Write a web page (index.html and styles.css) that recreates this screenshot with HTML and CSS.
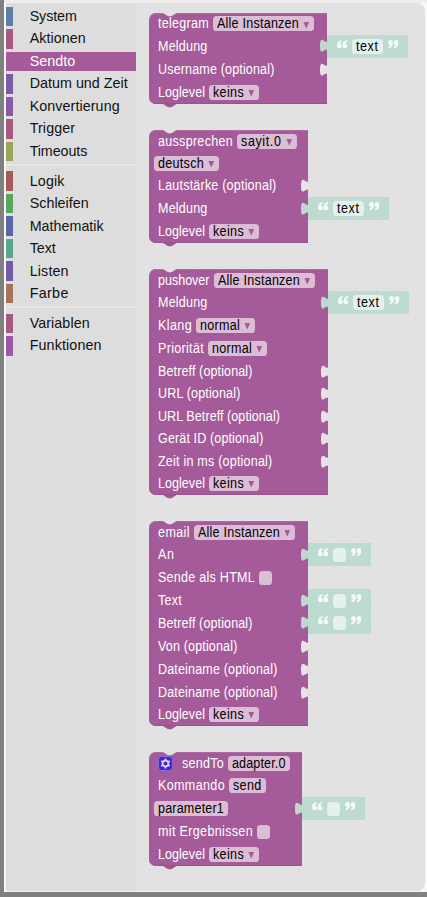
FILE: index.html
```html
<!DOCTYPE html>
<html lang="de">
<head>
<meta charset="utf-8">
<title>Blockly</title>
<link rel="stylesheet" href="styles.css">
</head>
<body>
<svg class="defs" aria-hidden="true">
  <symbol id="notch" viewBox="0 0 15 4"><path d="M0 0L6 4H9L15 0Z"/></symbol>
  <symbol id="tab" viewBox="0 0 8 15"><path d="M8 0C8 10 0-8 0 7.500S8 5 8 15Z"/></symbol>
  <symbol id="arrow" viewBox="0 0 7 8"><path d="M0 0H7L3.500 8Z"/></symbol>
  <symbol id="quote" viewBox="0 0 11 9"><path d="M4.600 0C1.600.500 0 2.600 0 5.700C0 7.800 1 8.900 2.600 8.900C4.100 8.900 5.100 7.900 5.100 6.400C5.100 5 4.200 4 3 3.900C3.200 2.900 3.800 2 5 1.500ZM10.400 0C7.400.500 5.800 2.600 5.800 5.700C5.800 7.800 6.800 8.900 8.400 8.900C9.900 8.900 10.900 7.900 10.900 6.400C10.900 5 10 4 8.800 3.900C9 2.900 9.600 2 10.800 1.500Z"/></symbol>
</svg>
<div class="window">
  <nav class="toolbox">
    <div class="cat" style="--c:#5b80a5"><span data-w="47">System</span></div>
    <div class="cat" style="--c:#a55b80"><span data-w="56">Aktionen</span></div>
    <div class="cat selected" style="--c:#a55b99"><span data-w="45.5">Sendto</span></div>
    <div class="cat" style="--c:#805ba5"><span data-w="98">Datum und Zeit</span></div>
    <div class="cat" style="--c:#8a5ba5"><span data-w="90">Konvertierung</span></div>
    <div class="cat" style="--c:#a55b80"><span data-w="45.5">Trigger</span></div>
    <div class="cat" style="--c:#99a55b"><span data-w="57.5">Timeouts</span></div>
    <div class="sep"></div>
    <div class="cat" style="--c:#a55b5b"><span data-w="35">Logik</span></div>
    <div class="cat" style="--c:#5ba55b"><span data-w="59">Schleifen</span></div>
    <div class="cat" style="--c:#5b67a5"><span data-w="74">Mathematik</span></div>
    <div class="cat" style="--c:#5ba58c"><span data-w="26">Text</span></div>
    <div class="cat" style="--c:#745ba5"><span data-w="39">Listen</span></div>
    <div class="cat" style="--c:#a5745b"><span data-w="39">Farbe</span></div>
    <div class="sep"></div>
    <div class="cat" style="--c:#a55b80"><span data-w="60">Variablen</span></div>
    <div class="cat" style="--c:#995ba5"><span data-w="72">Funktionen</span></div>
  </nav>
  <main class="flyout">
    <section class="block telegram">
      <svg class="notch"><use href="#notch"/></svg>
      <div class="row"><div class="face"><span data-w="51">telegram</span><div class="field"><span data-w="82">Alle Instanzen</span><svg class="arrow"><use href="#arrow"/></svg></div></div></div>
      <div class="row"><div class="face"><span data-w="49.5">Meldung</span><svg class="tab full"><use href="#tab"/></svg></div><div class="value"><svg class="quote"><use href="#quote"/></svg><div class="field"><span data-w="22.5">text</span></div><svg class="quote close"><use href="#quote"/></svg></div></div>
      <div class="row"><div class="face"><span data-w="116.5">Username (optional)</span><svg class="tab"><use href="#tab"/></svg></div></div>
      <div class="row"><div class="face"><span data-w="47">Loglevel</span><div class="field"><span data-w="31">keins</span><svg class="arrow"><use href="#arrow"/></svg></div></div></div>
      <svg class="next"><use href="#notch"/></svg>
    </section>
    <section class="block sayit">
      <svg class="notch"><use href="#notch"/></svg>
      <div class="row"><div class="face"><span data-w="75">aussprechen</span><div class="field"><span data-w="40.5">sayit.0</span><svg class="arrow"><use href="#arrow"/></svg></div></div></div>
      <div class="row"><div class="face lead"><div class="field"><span data-w="46">deutsch</span><svg class="arrow"><use href="#arrow"/></svg></div></div></div>
      <div class="row"><div class="face"><span data-w="118.5">Lautstärke (optional)</span><svg class="tab"><use href="#tab"/></svg></div></div>
      <div class="row"><div class="face"><span data-w="49.5">Meldung</span><svg class="tab full"><use href="#tab"/></svg></div><div class="value"><svg class="quote"><use href="#quote"/></svg><div class="field"><span data-w="22.5">text</span></div><svg class="quote close"><use href="#quote"/></svg></div></div>
      <div class="row"><div class="face"><span data-w="47">Loglevel</span><div class="field"><span data-w="31">keins</span><svg class="arrow"><use href="#arrow"/></svg></div></div></div>
      <svg class="next"><use href="#notch"/></svg>
    </section>
    <section class="block pushover">
      <svg class="notch"><use href="#notch"/></svg>
      <div class="row"><div class="face"><span data-w="51.5">pushover</span><div class="field"><span data-w="82">Alle Instanzen</span><svg class="arrow"><use href="#arrow"/></svg></div></div></div>
      <div class="row"><div class="face"><span data-w="49.5">Meldung</span><svg class="tab full"><use href="#tab"/></svg></div><div class="value"><svg class="quote"><use href="#quote"/></svg><div class="field"><span data-w="22.5">text</span></div><svg class="quote close"><use href="#quote"/></svg></div></div>
      <div class="row"><div class="face"><span data-w="34">Klang</span><div class="field"><span data-w="40">normal</span><svg class="arrow"><use href="#arrow"/></svg></div></div></div>
      <div class="row"><div class="face"><span data-w="46">Priorität</span><div class="field"><span data-w="40">normal</span><svg class="arrow"><use href="#arrow"/></svg></div></div></div>
      <div class="row"><div class="face"><span data-w="94.5">Betreff (optional)</span><svg class="tab"><use href="#tab"/></svg></div></div>
      <div class="row"><div class="face"><span data-w="82.5">URL (optional)</span><svg class="tab"><use href="#tab"/></svg></div></div>
      <div class="row"><div class="face"><span data-w="122">URL Betreff (optional)</span><svg class="tab"><use href="#tab"/></svg></div></div>
      <div class="row"><div class="face"><span data-w="105.5">Gerät ID (optional)</span><svg class="tab"><use href="#tab"/></svg></div></div>
      <div class="row"><div class="face"><span data-w="114.5">Zeit in ms (optional)</span><svg class="tab"><use href="#tab"/></svg></div></div>
      <div class="row"><div class="face"><span data-w="47">Loglevel</span><div class="field"><span data-w="31">keins</span><svg class="arrow"><use href="#arrow"/></svg></div></div></div>
      <svg class="next"><use href="#notch"/></svg>
    </section>
    <section class="block email">
      <svg class="notch"><use href="#notch"/></svg>
      <div class="row"><div class="face"><span data-w="32">email</span><div class="field"><span data-w="82">Alle Instanzen</span><svg class="arrow"><use href="#arrow"/></svg></div></div></div>
      <div class="row"><div class="face"><span data-w="16.5">An</span><svg class="tab full"><use href="#tab"/></svg></div><div class="value"><svg class="quote"><use href="#quote"/></svg><div class="field box"></div><svg class="quote close"><use href="#quote"/></svg></div></div>
      <div class="row"><div class="face"><span data-w="97">Sende als HTML</span><div class="field box"></div></div></div>
      <div class="row"><div class="face"><span data-w="24">Text</span><svg class="tab full"><use href="#tab"/></svg></div><div class="value"><svg class="quote"><use href="#quote"/></svg><div class="field box"></div><svg class="quote close"><use href="#quote"/></svg></div></div>
      <div class="row"><div class="face"><span data-w="94.5">Betreff (optional)</span><svg class="tab full"><use href="#tab"/></svg></div><div class="value"><svg class="quote"><use href="#quote"/></svg><div class="field box"></div><svg class="quote close"><use href="#quote"/></svg></div></div>
      <div class="row"><div class="face"><span data-w="79.5">Von (optional)</span><svg class="tab"><use href="#tab"/></svg></div></div>
      <div class="row"><div class="face"><span data-w="119.5">Dateiname (optional)</span><svg class="tab"><use href="#tab"/></svg></div></div>
      <div class="row"><div class="face"><span data-w="119.5">Dateiname (optional)</span><svg class="tab"><use href="#tab"/></svg></div></div>
      <div class="row"><div class="face"><span data-w="47">Loglevel</span><div class="field"><span data-w="31">keins</span><svg class="arrow"><use href="#arrow"/></svg></div></div></div>
      <svg class="next"><use href="#notch"/></svg>
    </section>
    <section class="block sendto">
      <svg class="notch"><use href="#notch"/></svg>
      <div class="row"><div class="face"><svg class="gear" viewBox="0 0 15 15"><rect x=".5" y=".5" width="14" height="14" rx="3" fill="#4527c9" stroke="#8a6be0"/><g stroke="#ddd5ff" fill="none"><circle cx="7.500" cy="7.500" r="2.900" stroke-width="1.700"/><path d="M7.500 2.500V4.500M7.500 10.500V12.500M3.200 5L4.900 6M10.100 9L11.800 10M3.200 10L4.900 9M10.100 6L11.800 5" stroke-width="1.700"/></g></svg><span data-w="42">sendTo</span><div class="field"><span data-w="53.5">adapter.0</span></div></div></div>
      <div class="row"><div class="face"><span data-w="67">Kommando</span><div class="field"><span data-w="28.5">send</span></div></div></div>
      <div class="row"><div class="face lead"><div class="field"><span data-w="66">parameter1</span></div><svg class="tab full"><use href="#tab"/></svg></div><div class="value"><svg class="quote"><use href="#quote"/></svg><div class="field box"></div><svg class="quote close"><use href="#quote"/></svg></div></div>
      <div class="row"><div class="face"><span data-w="95">mit Ergebnissen</span><div class="field box"></div></div></div>
      <div class="row"><div class="face"><span data-w="47">Loglevel</span><div class="field"><span data-w="31">keins</span><svg class="arrow"><use href="#arrow"/></svg></div></div></div>
      <svg class="next"><use href="#notch"/></svg>
    </section>
  </main>
</div>
<script src="labels.js"></script>
</body>
</html>
```
FILE: styles.css
```css
* { box-sizing: border-box; }
body { margin: 0; font-family: "Liberation Sans", Arial, sans-serif; background: #eee; }
svg { display: block; flex: none; overflow: visible; }
.defs { position: absolute; width: 0; height: 0; }
.window {
  display: flex;
  width: 427px;
  height: 897px;
  padding: 3px 2px 0 0;
  border-left: 4px solid #808080;
  border-bottom: 5px solid #808080;
  background: linear-gradient(#eee 3px, #f8f8f8 3px);
}
[data-w] { display: block; white-space: pre; flex: none; transform-origin: 0 50%; }

.toolbox { width: 130px; height: 888px; margin-left: 2px; padding-top: 3.700px; background: #ddd; font-size: 14.300px; color: #111; flex: none; }
.cat { display: flex; align-items: center; height: 19.500px; margin-bottom: 3px; padding-left: 16.700px; border-left: 7px solid var(--c); line-height: 19px; }
.selected { background: var(--c); color: #fff; }
.sep { height: 2px; margin: 0 0 5.200px; background: #e6e6e6; }

.flyout {
  flex: 1;
  height: 888px;
  padding: 10px 0 0 13px;
  border-radius: 0 8px 8px 0;
  background-color: #e2e2e2;
  background-image: radial-gradient(circle at 16px 17px, #d8d8d8 0, #d8d8d8 .800px, transparent 1.300px);
  background-size: 22.500px 22.500px;
}
.block {
  position: relative;
  display: grid;
  align-content: start;
  border-radius: 7px 0 0 7px;
  background: #a55b99;
  box-shadow: inset 0 -1px #98528d, inset 0 1px #ad6ba2;
  color: #fff;
  font-size: 13.800px;
  line-height: 15px;
  --squeeze: .91;
}
.telegram { width: 178px; height: 91px; margin-bottom: 26px; grid-template-rows: 21.500px 23.500px 23px 22px; }
.sayit { width: 159px; height: 113px; margin-bottom: 26px; grid-template-rows: 22px 22px 23px 23px 23px; }
.pushover { width: 179px; height: 226px; margin-bottom: 26px; grid-template-rows: 22px 23px 23px 23px 22px 23px 22px 23px 22px 22px; }
.email { width: 159px; height: 205px; margin-bottom: 26px; grid-template-rows: 22px 23px 23px 22px 24px 23px 23px 22px 23px; }
.sendto { width: 153px; height: 114px; grid-template-rows: 22px 23px 23px 23px 22px; }

.notch, .next { position: absolute; left: 13.500px; width: 13.500px; height: 3.600px; }
.notch { top: 0; fill: #e2e2e2; }
.next { top: 100%; fill: #a0568f; }
.row { display: flex; min-width: 0; }
.face { position: relative; display: flex; align-items: center; gap: 4px; flex: 0 0 100%; padding-left: 9px; }
.lead { padding-left: 5px; }
.field { display: flex; align-items: center; gap: 4px; flex: none; height: 15px; padding: 0 4px; border-radius: 3.600px; background: #dbbdd6; color: #000; }
.box { width: 13px; height: 14px; padding: 0; }
.arrow { width: 6.500px; height: 6.500px; margin: 2px .500px 0 0; fill: #a55b99; }
.tab { position: absolute; right: 0; top: 4.500px; width: 7.200px; height: 13.500px; fill: #e6e3e6; }
.full { fill: #bdd9cf; }
.value { display: flex; align-items: center; gap: 5px; flex: none; height: 23px; padding: 0 9.500px; background: #bddbd0; }
.value .field { background: #e5f1ec; }
.quote { width: 10.500px; height: 8.500px; margin-top: -4px; fill: #f4faf7; }
.close { transform: rotate(180deg); }
.gear { width: 15px; height: 15px; margin-right: 5px; }
```
FILE: labels.js
```js
// Fit each label to its advance width by horizontal scale and tracking.
document.querySelectorAll("[data-w]").forEach(function (el) {
  var target = parseFloat(el.dataset.w);
  var squeeze = parseFloat(getComputedStyle(el).getPropertyValue("--squeeze")) || 1;
  var range = document.createRange();
  range.selectNodeContents(el);
  var natural = range.getBoundingClientRect().width;
  var width = target / squeeze;
  el.style.letterSpacing = (width - natural) / el.textContent.length + "px";
  el.style.width = width + "px";
  el.style.marginRight = target - width + "px";
  if (squeeze !== 1) el.style.transform = "scaleX(" + squeeze + ")";
});
```
